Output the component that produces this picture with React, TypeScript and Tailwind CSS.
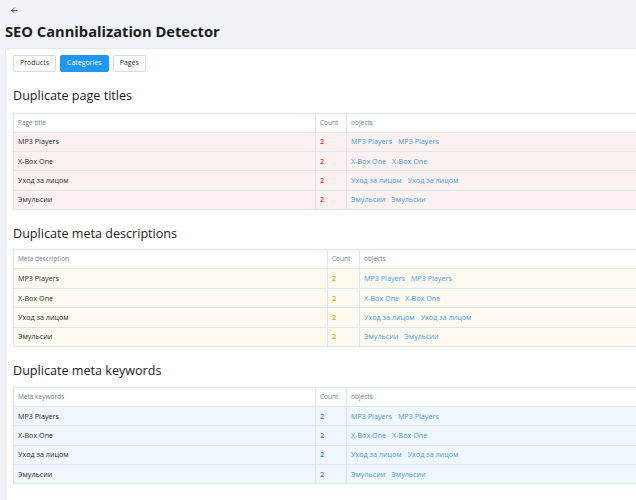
import React from 'react';
import { ArrowLeft } from 'lucide-react';

interface Section {
  title: string;
  label: string;
  rowBg: string;
  countColor: string;
  cols: string;
  space: string;
  gap: string;
}

const rows = ['MP3 Players', 'X-Box One', 'Уход за лицом', 'Эмульсии'];

const sections: Section[] = [
  {
    title: 'Duplicate page titles',
    label: 'Page title',
    rowBg: 'bg-[#fdf0f0]',
    countColor: 'text-[#e53935]',
    cols: 'grid-cols-[301px_31px_1fr]',
    space: 'mt-[15px]',
    gap: 'mb-[8.5px]',
  },
  {
    title: 'Duplicate meta descriptions',
    label: 'Meta description',
    rowBg: 'bg-[#fefaef]',
    countColor: 'text-[#f59e0b]',
    cols: 'grid-cols-[313px_32px_1fr]',
    space: 'mt-[14.8px]',
    gap: 'mb-[7.5px]',
  },
  {
    title: 'Duplicate meta keywords',
    label: 'Meta keywords',
    rowBg: 'bg-[#eff6fe]',
    countColor: 'text-[#1e88e5]',
    cols: 'grid-cols-[301px_31px_1fr]',
    space: 'mt-[15.4px]',
    gap: 'mb-[7.5px]',
  },
];

const tabs = ['Products', 'Categories', 'Pages'];

const DupTable: React.FC<{ s: Section }> = ({ s }) => (
  <div className="w-[720px] border border-[#dfe5ee] bg-white">
    <div className={`grid ${s.cols} h-[18px] items-stretch text-[6.5px] text-[#757b85]`}>
      <div className="flex items-center px-1">{s.label}</div>
      <div className="flex items-center px-1 border-l border-[#dfe5ee]">Count</div>
      <div className="flex items-center px-1 border-l border-[#dfe5ee]">objects</div>
    </div>
    {rows.map((r) => (
      <div
        key={r}
        className={`grid ${s.cols} h-[19.4px] items-stretch border-t border-[#dfe5ee] ${s.rowBg} text-[7.2px]`}
      >
        <div className="flex items-center px-1 text-[#2a2a2a]">{r}</div>
        <div className={`flex items-center px-1 border-l border-[#dfe5ee] font-semibold ${s.countColor}`}>2</div>
        <div className="flex items-center gap-[6px] px-1 border-l border-[#dfe5ee] text-[#3d9cec]">
          <span>{r}</span>
          <span>{r}</span>
        </div>
      </div>
    ))}
  </div>
);

const App: React.FC = () => {
  return (
    <div className="min-h-screen w-full overflow-hidden bg-[#f0f3f8] font-['Open_Sans',sans-serif] text-[#1a1a1a]">
      <div className="pl-[10px] pt-[5px] h-[15px] flex items-center">
        <ArrowLeft size={9} strokeWidth={2} className="text-[#222]" />
      </div>
      <h1 className="ml-[5px] mt-[6px] text-[14.7px] leading-[20px] font-bold text-[#1c1c1c]">
        SEO Cannibalization Detector
      </h1>
      <div className="ml-[5px] mt-[7px] w-[760px] rounded-[3px] border border-[#e4e8ef] bg-white px-[7px] pt-[6px] pb-6">
        <div className="flex gap-[4px]">
          {tabs.map((t) => (
            <button
              key={t}
              className={
                t === 'Categories'
                  ? 'h-[17px] px-[6px] rounded-[2px] border border-[#2196f3] bg-[#2196f3] text-[7px] text-white'
                  : 'h-[17px] px-[6px] rounded-[2px] border border-[#d5dbe5] bg-white text-[7px] text-[#333]'
              }
            >
              {t}
            </button>
          ))}
        </div>
        {sections.map((s) => (
          <div key={s.title} className={s.space}>
            <h2 className={`text-[12.6px] leading-[17px] font-medium text-[#1c1c1c] ${s.gap}`}>{s.title}</h2>
            <DupTable s={s} />
          </div>
        ))}
      </div>
    </div>
  );
};

export default App;
